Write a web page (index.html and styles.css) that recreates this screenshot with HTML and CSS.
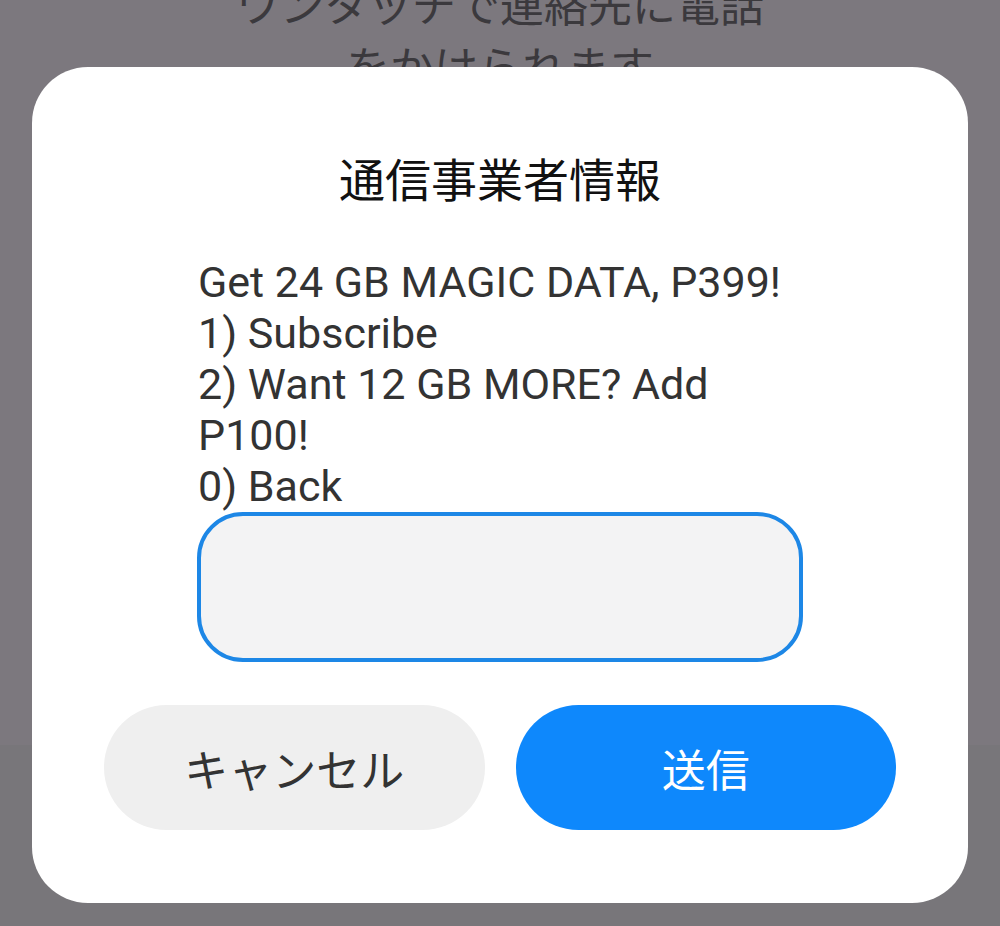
FILE: index.html
```html
<!DOCTYPE html>
<html lang="ja">
<head>
  <meta charset="UTF-8" />
  <meta name="viewport" content="width=device-width, initial-scale=1" />
  <title>通信事業者情報</title>
  <link rel="stylesheet" href="styles.css">
</head>
<body>

  <div id="page">
    <div class="behind-text">
      <p>ワンタッチで連絡先に電話</p>
      <p>をかけられます</p>
    </div>
    <div class="behind-bar"></div>
  </div>

  <div id="dialog">
    <h1 class="dialog-title">通信事業者情報</h1>
    <div class="message">
      Get 24 GB MAGIC DATA, P399!<br>
      1) Subscribe<br>
      2) Want 12 GB MORE? Add P100!<br>
      0) Back
    </div>
    <div class="reply-box"></div>
    <div class="buttons">
      <button class="button cancel">キャンセル</button>
      <button class="button send">送信</button>
    </div>
  </div>

</body>
</html>
```

FILE: styles.css
```css
html, body {
  margin: 0;
  padding: 0;
  height: 100%;
  overflow: hidden;
  font-family: Roboto, 'Noto Sans CJK JP', sans-serif;
  background: #7c787e;
}

#page {
  display: flex;
  flex-direction: column;
  height: 926px;
}

.behind-text {
  margin-top: -28px;
  text-align: center;
  color: #3b393d;
  font-family: 'Noto Sans CJK JP', sans-serif;
  font-size: 44px;
  line-height: 62px;
}

.behind-text p {
  margin: 0;
}

.behind-bar {
  margin-top: auto;
  height: 181px;
  background: #78767a;
}

#dialog {
  position: absolute;
  left: 32px;
  top: 67px;
  width: 936px;
  height: 836px;
  box-sizing: border-box;
  padding: 80px 72px 72px;
  background: #fff;
  border-radius: 56px;
  display: flex;
  flex-direction: column;
}

.dialog-title {
  margin: 0;
  text-align: center;
  font-family: 'Noto Sans CJK JP', sans-serif;
  font-weight: 400;
  font-size: 46px;
  line-height: 60px;
  color: #111;
}

.message {
  margin: 50px 94px 0;
  font-size: 43px;
  line-height: 51px;
  color: #333;
}

.reply-box {
  margin: 0 93px;
  height: 150px;
  box-sizing: border-box;
  border: 4px solid #1d87e6;
  border-radius: 46px;
  background: #f3f3f4;
}

.buttons {
  display: flex;
  gap: 31px;
  margin-top: 43px;
}

.button {
  flex: 1;
  height: 125px;
  border: none;
  border-radius: 63px;
  font-family: 'Noto Sans CJK JP', sans-serif;
  font-size: 44px;
  cursor: pointer;
}

.cancel {
  background: #efefef;
  color: #333;
}

.send {
  background: #0e88fc;
  color: #fff;
}
```
